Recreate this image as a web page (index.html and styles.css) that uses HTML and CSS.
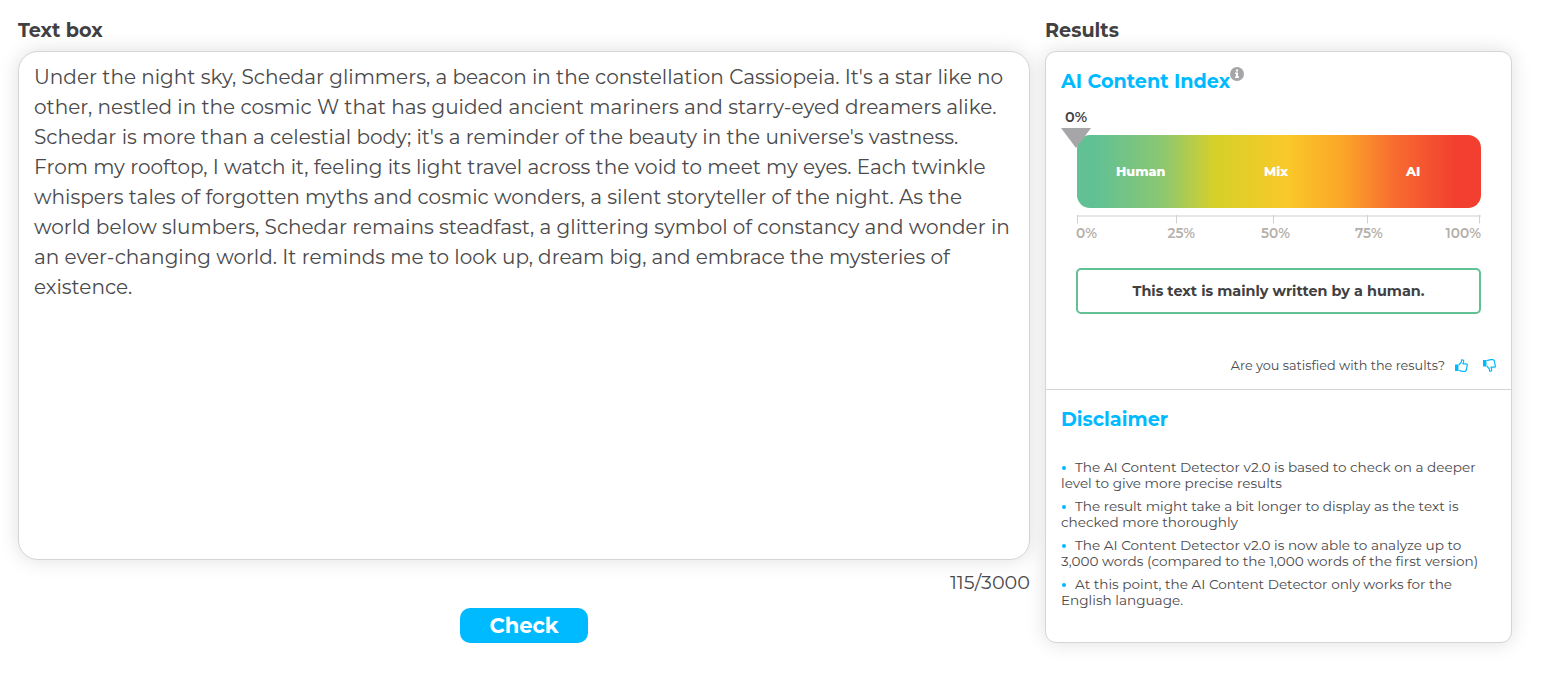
FILE: index.html
```
<!DOCTYPE html>
<html lang="en">
<head>
    <meta charset="UTF-8">
    <meta name="viewport" content="width=device-width, initial-scale=1.0">
    <title>AI Content Detector</title>
    <link rel="stylesheet" href="styles.css">
</head>
<body>
    <main class="detector">
        <section class="text-column">
            <h2 class="column-title">Text box</h2>
            <div class="text-box">
                <span class="line">Under the night sky, Schedar glimmers, a beacon in the constellation Cassiopeia. It's a star like no</span>
                <span class="line">other, nestled in the cosmic W that has guided ancient mariners and starry-eyed dreamers alike.</span>
                <span class="line">Schedar is more than a celestial body; it's a reminder of the beauty in the universe's vastness.</span>
                <span class="line">From my rooftop, I watch it, feeling its light travel across the void to meet my eyes. Each twinkle</span>
                <span class="line">whispers tales of forgotten myths and cosmic wonders, a silent storyteller of the night. As the</span>
                <span class="line">world below slumbers, Schedar remains steadfast, a glittering symbol of constancy and wonder in</span>
                <span class="line">an ever-changing world. It reminds me to look up, dream big, and embrace the mysteries of</span>
                <span class="line">existence.</span>
            </div>
            <p class="counter">115/3000</p>
            <button type="button" class="check-btn">Check</button>
        </section>

        <section class="results-column">
            <h2 class="column-title">Results</h2>
            <div class="results-card">
                <div class="index-panel">
                    <h3 class="panel-title"><span>AI Content Index</span>
                        <svg class="info-icon" viewBox="0 0 14 14">
                            <circle cx="7" cy="7" r="7" fill="#a6a6a8"/>
                            <path d="M6 2.500h2v1.900H6zM5 5.500h3v4h1V11H5V9.500h1V7H5z" fill="#fff"/>
                        </svg>
                    </h3>

                    <div class="gauge">
                        <div class="gauge-bar">
                            <span class="zone-human">Human</span>
                            <span class="zone-mix">Mix</span>
                            <span class="zone-ai">AI</span>
                        </div>
                        <div class="marker">
                            <span class="marker-value">0%</span>
                            <svg class="marker-arrow" viewBox="0 0 30 20"><path d="M0 0h30L15 20z" fill="#a6a6a8"/></svg>
                        </div>
                        <svg class="ticks" viewBox="0 0 404 10">
                            <path d="M0 1h404" stroke="#e6e6e6" stroke-width="2"/>
                            <path d="M.5 0v8.500M99.500 0v8.500M196.500 0v8.500M290.500 0v8.500M402.500 0v8.500" stroke="#d0d0d0"/>
                        </svg>
                        <div class="scale">
                            <span>0%</span>
                            <span>25%</span>
                            <span>50%</span>
                            <span>75%</span>
                            <span>100%</span>
                        </div>
                    </div>

                    <div class="verdict">This text is mainly written by a human.</div>

                    <div class="feedback">
                        <span>Are you satisfied with the results?</span>
                        <svg class="thumb" viewBox="0 0 13 13">
                            <path d="M0 5.500h3.500V12H0z" fill="#00baff"/>
                            <path d="M3.800 6 6.300 3.200 6.600.8C8.400.4 9 1.900 8.500 3.300L8 4.800h3.300c.9 0 1.300.9.900 1.600L11.300 11c-.2.900-.6 1.300-1.500 1.300H7.500c-1.500 0-2-.8-3.700-.8" fill="none" stroke="#00baff" stroke-width="1.200" stroke-linejoin="round"/>
                        </svg>
                        <svg class="thumb thumb-down" viewBox="0 0 13 13">
                            <path d="M0 5.500h3.500V12H0z" fill="#00baff"/>
                            <path d="M3.800 6 6.300 3.200 6.600.8C8.400.4 9 1.900 8.500 3.300L8 4.800h3.300c.9 0 1.300.9.900 1.600L11.300 11c-.2.900-.6 1.300-1.500 1.300H7.500c-1.500 0-2-.8-3.700-.8" fill="none" stroke="#00baff" stroke-width="1.200" stroke-linejoin="round"/>
                        </svg>
                    </div>
                </div>

                <div class="disclaimer">
                    <h3 class="panel-title">Disclaimer</h3>
                    <ul class="notes">
                        <li>The AI Content Detector v2.0 is based to check on a deeper<br>level to give more precise results</li>
                        <li>The result might take a bit longer to display as the text is<br>checked more thoroughly</li>
                        <li>The AI Content Detector v2.0 is now able to analyze up to<br>3,000 words (compared to the 1,000 words of the first version)</li>
                        <li>At this point, the AI Content Detector only works for the<br>English language.</li>
                    </ul>
                </div>
            </div>
        </section>
    </main>
</body>
</html>
```
FILE: styles.css
```
* {
    margin: 0;
    padding: 0;
    box-sizing: border-box;
}

body {
    font-family: Montserrat, Inter, sans-serif;
    background: #fff;
    color: #4a494b;
    font-weight: 400;
}

.detector {
    display: flex;
    gap: 15px;
    padding: 18px 44px 0 18px;
    height: 683px;
    overflow: hidden;
}

.text-column {
    width: 1012px;
    display: flex;
    flex-direction: column;
}

.results-column {
    width: 467px;
}

.column-title {
    height: 33px;
    font-size: 19.2px;
    line-height: 25px;
    font-weight: 700;
    color: #414042;
}

.text-box {
    height: 509px;
    padding: 10px 15px;
    border: 1px solid #d5d5d5;
    border-radius: 20px;
    background: #fff;
    box-shadow: 0 0 20px rgba(0, 0, 0, 0.13);
    font-size: 20px;
    line-height: 30px;
}

.line {
    display: block;
    white-space: nowrap;
}

.counter {
    margin-top: 7px;
    text-align: right;
    font-size: 19.2px;
    line-height: 30px;
}

.check-btn {
    align-self: center;
    width: 128px;
    height: 35px;
    margin-top: 11px;
    border: none;
    border-radius: 10px;
    background: #00baff;
    color: #fff;
    font-family: inherit;
    font-size: 21px;
    font-weight: 700;
    cursor: pointer;
}

.results-card {
    height: 592px;
    border: 1px solid #d5d5d5;
    border-radius: 11px;
    background: #fff;
    box-shadow: 0 0 20px rgba(0, 0, 0, 0.13);
}

.index-panel {
    height: 338px;
    padding: 15px;
    border-bottom: 1px solid #d5d5d5;
}

.panel-title {
    display: flex;
    height: 30px;
    font-size: 19.2px;
    line-height: 29px;
    font-weight: 700;
    color: #00baff;
}

.info-icon {
    width: 14px;
    height: 14px;
}

.gauge {
    position: relative;
    width: 404px;
    margin: 38px 0 0 16px;
}

.gauge-bar {
    position: relative;
    height: 73px;
    border-radius: 13px;
    background: linear-gradient(90deg, #62c194 0%, #62c194 5%, #8bc772 21%, #d5d02a 34%, #fac929 52%, #fba528 66%, #f76a30 79%, #f23f30 94%, #f23f30 100%);
    color: #fff;
    font-size: 12.8px;
    line-height: 73px;
    font-weight: 800;
}

.gauge-bar span {
    position: absolute;
    top: 0;
}

.zone-human {
    left: 39px;
}

.zone-mix {
    left: 187px;
}

.zone-ai {
    left: 329px;
}

.marker {
    position: absolute;
    left: -16px;
    top: -27px;
    width: 30px;
}

.marker-value {
    display: block;
    height: 20px;
    font-size: 14.4px;
    line-height: 18px;
    font-weight: 600;
    text-align: center;
    color: #414042;
}

.marker-arrow {
    display: block;
    width: 30px;
    height: 20px;
}

.ticks {
    display: block;
    width: 404px;
    height: 10px;
    margin-top: 7px;
}

.scale {
    display: grid;
    grid-template-columns: 91.5px 93.5px 94px 1fr auto;
    margin-left: -1px;
    font-size: 13.7px;
    line-height: 16px;
    font-weight: 600;
    color: #b5b0aa;
}

.verdict {
    width: 405px;
    height: 46px;
    margin: 27px 0 0 15px;
    border: 2px solid #62c194;
    border-radius: 5px;
    text-align: center;
    font-size: 14.4px;
    line-height: 42px;
    font-weight: 700;
    color: #414042;
}

.feedback {
    display: flex;
    justify-content: flex-end;
    margin-top: 42px;
    font-size: 12.8px;
    line-height: 20px;
}

.thumb {
    width: 13px;
    height: 13px;
    margin: 3px 0 0 10px;
}

.thumb-down {
    margin-left: 15px;
    transform: scaleY(-1);
}

.disclaimer {
    padding: 15px;
}

.notes {
    margin-top: 24px;
    list-style: none;
    font-size: 13.6px;
    line-height: 16px;
}

.notes li {
    margin-bottom: 7px;
    white-space: nowrap;
}

.notes li::before {
    content: '';
    display: inline-block;
    width: 4px;
    height: 4px;
    margin: 0 9px 1px 1px;
    border-radius: 50%;
    vertical-align: middle;
    background: #00baff;
}
```
